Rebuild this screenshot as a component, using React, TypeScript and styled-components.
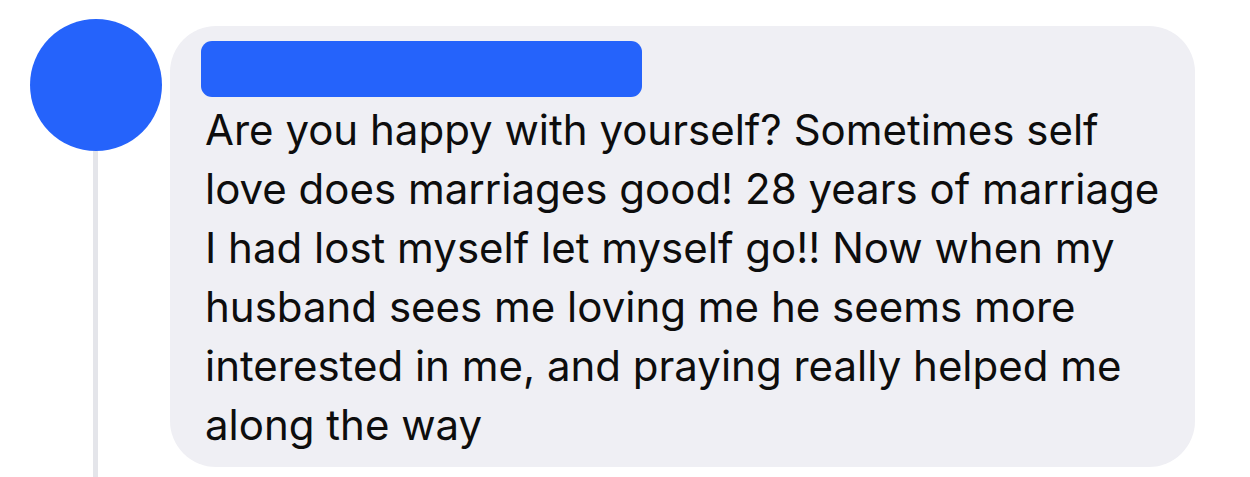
import React from "react";
import styled, { createGlobalStyle } from "styled-components";

const Global = createGlobalStyle`
  html, body { margin: 0; padding: 0; background: #ffffff; }
  body { font-family: Inter, "Liberation Sans", Arial, sans-serif; }
`;

const Page = styled.div`
  display: flex;
  align-items: flex-start;
  width: 1250px;
  height: 477px;
  overflow: hidden;
  padding-left: 30px;
  box-sizing: border-box;
`;

const AvatarColumn = styled.div`
  display: flex;
  flex-direction: column;
  align-items: center;
  width: 132px;
  height: 477px;
  padding-top: 19px;
  box-sizing: border-box;
`;

const Avatar = styled.div`
  width: 132px;
  height: 132px;
  border-radius: 50%;
  background: #2563fb;
  flex: none;
`;

const ThreadLine = styled.div`
  flex: 1;
  width: 5px;
  margin-left: -2px;
  background: #e4e5ea;
`;

const Bubble = styled.div`
  margin-left: 8px;
  margin-top: 26px;
  width: 1025px;
  height: 441px;
  box-sizing: border-box;
  border-radius: 46px;
  background: #efeff4;
  padding: 15px 0 0 31px;
  display: flex;
  flex-direction: column;
`;

const NameBar = styled.div`
  width: 441px;
  height: 56px;
  border-radius: 11px;
  background: #2563fb;
`;

const Body = styled.p`
  margin: 3px 0 0 0;
  padding-left: 4px;
  font-size: 42px;
  line-height: 59px;
  color: #0d0d0d;
  letter-spacing: 0;
`;

const Line = styled.span`
  display: block;
  white-space: nowrap;
`;

const lines = [
  "Are you happy with yourself? Sometimes self",
  "love does marriages good! 28 years of marriage",
  "I had lost myself let myself go!! Now when my",
  "husband sees me loving me he seems more",
  "interested in me, and praying really helped me",
  "along the way",
];

export default function App() {
  return (
    <>
      <Global />
      <Page>
        <AvatarColumn>
          <Avatar />
          <ThreadLine />
        </AvatarColumn>
        <Bubble>
          <NameBar />
          <Body>
            {lines.map((l, i) => (
              <Line key={i}>{l}</Line>
            ))}
          </Body>
        </Bubble>
      </Page>
    </>
  );
}
